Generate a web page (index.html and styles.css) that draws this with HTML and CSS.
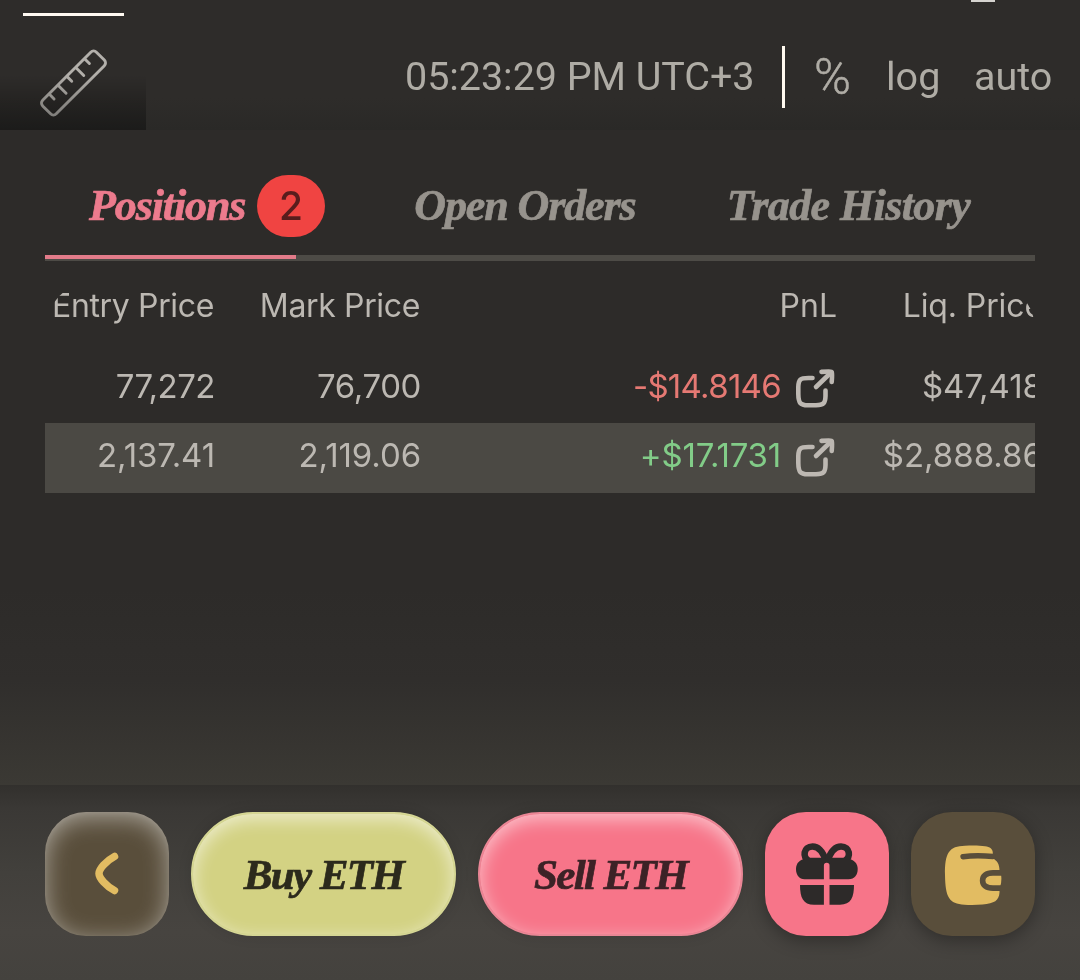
FILE: index.html
```html
<!DOCTYPE html>
<html lang="en">
<head>
<meta charset="utf-8">
<title>Positions</title>
<link rel="stylesheet" href="styles.css">
</head>
<body>
<div class="app">
  <header class="chart-bar">
    <div class="tools">
      <div class="tool-line"></div>
      <svg class="ruler" viewBox="0 0 72 72" fill="none" stroke="#b3b0ab" stroke-width="2.9" stroke-linecap="round">
        <g transform="translate(36.500 36) rotate(-45)">
          <rect x="-38" y="-9.6" width="76" height="19.2" rx="4"/>
          <path d="M-25 -9v6.500M-12.500 -9v11M0 -9v6.500M12.500 -9v11M25 -9v6.500"/>
        </g>
      </svg>
      <div class="tool-fade"></div>
    </div>
    <div class="scale">
      <span class="clock">05:23:29 PM UTC+3</span>
      <i class="divider"></i>
      <span class="percent">%</span>
      <span class="log">log</span>
      <span class="auto">auto</span>
    </div>
    <i class="top-mark"></i>
  </header>

  <main class="panel">
    <nav class="tabs">
      <div class="tab active"><span class="t-positions">Positions</span><b class="badge">2</b></div>
      <div class="tab"><span class="t-orders">Open Orders</span></div>
      <div class="tab"><span class="t-history">Trade History</span></div>
    </nav>
    <div class="track"><div class="track-on"></div></div>
    <section class="table">
      <div class="row head"><span class="h1">Entry Price</span><span class="h2">Mark Price</span><span class="h3">PnL</span><span class="h4">Liq. Price</span></div>
      <div class="row">
        <span class="n1">77,272</span><span class="n2">76,700</span>
        <span class="pnl down"><em class="p1">-$14.8146</em><svg class="share" viewBox="0 0 42 42" fill="none" stroke="#bdb8b2" stroke-width="4.6" stroke-linecap="round" stroke-linejoin="round"><path d="M18.500 10h-4C6 10 4.500 11.500 4.300 19v7C4.500 35 6 37 14 37.300h8c8-.3 9.300-2.300 9.500-9.300v-5.500"/><path d="M22 19 37 4.500"/><path d="M27.500 3.900c6-.5 10-.6 10.200.1s.5 4.600 0 10"/></svg></span>
        <span class="n4">$47,418</span>
      </div>
      <div class="row alt">
        <span class="n5">2,137.41</span><span class="n6">2,119.06</span>
        <span class="pnl up"><em class="p2">+$17.1731</em><svg class="share" viewBox="0 0 42 42" fill="none" stroke="#bdb8b2" stroke-width="4.6" stroke-linecap="round" stroke-linejoin="round"><path d="M18.500 10h-4C6 10 4.500 11.500 4.300 19v7C4.500 35 6 37 14 37.300h8c8-.3 9.300-2.300 9.500-9.300v-5.500"/><path d="M22 19 37 4.500"/><path d="M27.500 3.900c6-.5 10-.6 10.200.1s.5 4.600 0 10"/></svg></span>
        <span class="n8">$2,888.86</span>
      </div>
    </section>
  </main>

  <footer class="actions">
    <div class="btn back"><svg viewBox="0 0 124 124" fill="none" stroke="#e2bc62" stroke-width="7.5" stroke-linecap="round" stroke-linejoin="round"><path d="M69.500 44.500C61 49 54 57 54 61.500s7 12.500 15.500 17"/></svg></div>
    <div class="btn buy"><span>Buy ETH</span></div>
    <div class="btn sell"><span>Sell ETH</span></div>
    <div class="btn gift"><svg viewBox="0 0 124 124">
      <g fill="none" stroke="#2d2a29" stroke-width="6.6" stroke-linejoin="round"><path d="M61 49c-2-6-6-14.500-13.500-14.500-9 0-10.500 11-3.500 14.500z"/><path d="M62.500 49c2-6 6-14.500 13.500-14.500 9 0 10.500 11 3.500 14.500z"/></g>
      <path fill="#2d2a29" d="M31 57c0-5.500 3.500-9.500 9-10h43.500c5.500.5 9.200 4.500 9.200 10 0 6-3 10-9.200 10.400h-44C34 67 31 63 31 57z"/>
      <path fill="#2d2a29" d="M35 72.500h54c0 13-3 20-14 20.300H49C38 92.500 35 86 35 72.500z"/>
      <path fill="none" stroke="#f77589" stroke-width="5.600" d="M61.700 94V53.500M36 70.200h52" stroke-linecap="round"/>
    </svg></div>
    <div class="btn wallet"><svg viewBox="0 0 124 124">
      <path fill="#e2bc62" d="M34 63c-.3-22 4-29 20-29.300 9-.3 15-.2 20 .6 5 .8 7.800 2.500 7.800 6.500V46.500c4.500 2 6.700 6 6.700 12h.7q1.200 3 1.200 8t-1.200 8h-.7v6c-.5 8-5 11-17 12-6 .5-13 .5-18 .2C38 92 34.300 85 34 63z"/>
      <path fill="none" stroke="#594e3b" stroke-width="5.400" stroke-linecap="round" d="M52 44.700c9-1.200 19-1.200 30-.2"/>
      <path fill="none" stroke="#594e3b" stroke-width="5.600" d="M92 60.900H82c-7 0-10.400 3-10.400 7.600s3.400 7.600 10.400 7.600h10"/>
    </svg></div>
  </footer>
</div>
</body>
</html>
```
FILE: styles.css
```css
* { box-sizing: border-box; }
body { margin: 0; background: #2d2b29; }
.app { width: 1080px; height: 980px; overflow: hidden; display: flex; flex-direction: column; }
svg { display: block; flex: none; }

.chart-bar { position: relative; height: 130px; display: flex; justify-content: space-between; background: linear-gradient(#2e2c2a 75%, #2a2927); }
.tools { position: relative; width: 146px; padding-top: 13px; }
.tool-line { width: 101px; height: 3px; margin-left: 23px; background: #fffaf2; }
.ruler { width: 72px; height: 72px; margin: 31px 0 0 37px; }
.tool-fade { position: absolute; inset: 74px 0 0 0; mix-blend-mode: multiply; background: linear-gradient(#fff, #c9c9c9 50%, #a4a6a8); }
.scale { display: flex; align-items: center; height: 60px; margin-top: 47px; padding-right: 28px; font: 39.500px/60px Roboto, sans-serif; color: #afaca5; white-space: nowrap; }
.clock { width: 349px; letter-spacing: -.05px; }
.divider { width: 3px; height: 62px; margin: 0 28px; background: #fffaf0; }
.percent { width: 73px; padding-left: 1px; font-size: 50px; font-weight: 300; -webkit-text-stroke: .5px currentColor; }
.log { width: 88px; }
.auto { width: 78px; }
.top-mark { position: absolute; left: 971px; top: 0; width: 24px; height: 2px; background: #d5d3cf; }

.panel { height: 655px; padding: 0 45px; background: linear-gradient(#2d2b29 70%, #302e2c 84%, #3b3934); }
.tabs { height: 125px; padding: 45px 0 0 44px; display: flex; font: italic bold 44px/62px "Liberation Serif", serif; color: #97938d; white-space: nowrap; }
.tab { display: flex; width: 313px; }
.tab:first-child { width: 328px; }
.active { color: #ec7b8d; }
.tab span { -webkit-text-stroke: .7px currentColor; }
.t-positions { width: 168px; letter-spacing: -1.1px; }
.t-orders { letter-spacing: -1.1px; }
.t-history { letter-spacing: -.6px; padding-left: 2px; }
.badge { width: 68px; height: 62px; border-radius: 31px; background: #f04442; color: #591d1d; font: 500 39px/62px Inter, sans-serif; text-align: center; }
.track { height: 6px; background: #4d4b46; }
.track-on { width: 251px; height: 4px; background: #e27b89; }
.table { font: 400 33px/66px Inter, sans-serif; color: #bcb8b2; }
.row { height: 70px; display: grid; grid-template-columns: 169px 206px 416px 207px; overflow: hidden; text-align: right; white-space: nowrap; }
.row > * { justify-self: end; }
.head { height: 73px; margin-top: 19px; font-size: 32px; line-height: 52px; letter-spacing: -.35px; border-radius: 52px 50px 0 0; }
.h3 { letter-spacing: 0; margin-right: -1px; }
.h4 { letter-spacing: -.1px; }
.alt { background: #4b4944; line-height: 65px; }
.n1, .n2, .n5, .n6 { margin-right: -1px; }
.n1 { letter-spacing: -.5px; }
.n2 { letter-spacing: -.4px; }
.n5, .n6 { letter-spacing: -.1px; }
.pnl { display: flex; gap: 13px; }
.pnl em { font-style: normal; }
.p1 { letter-spacing: -.7px; }
.p2 { letter-spacing: -.2px; }
.down { color: #e57973; }
.up { color: #82cc88; }
.share { width: 42px; height: 42px; margin: 15px 0 0; }
.alt .share { margin-top: 14px; }

.actions { height: 195px; display: flex; gap: 22px; padding: 27px 45px; background: linear-gradient(#32302d, #3a3835 12%, #42403c 45%, #474440 75%, #44423e); }
.btn { width: 124px; height: 124px; border-radius: 41px; flex: none; font: italic bold 43px/124px "Liberation Serif", serif; letter-spacing: -1.600px; text-align: center; color: #2c2a1c; white-space: nowrap; }
.btn span { -webkit-text-stroke: .7px currentColor; }
.back { background: #594e3b; box-shadow: inset 0 5px 24px rgba(225,223,220,.6), inset 0 2px 5px rgba(255,255,255,.08); }
.buy, .sell { width: 265px; border-radius: 62px; }
.buy { background: #d3d283; border: 2px solid #d5d694; line-height: 122px; box-shadow: inset 0 5px 18px rgba(255,255,255,.6), 0 0 14px rgba(0,0,0,.12); }
.sell { background: #f77589; border: 2px solid #e98695; line-height: 122px; color: #3c2226; box-shadow: inset 0 5px 18px rgba(255,255,255,.55), 0 0 14px rgba(0,0,0,.12); }
.gift { background: #f77589; box-shadow: 0 5px 18px rgba(0,0,0,.32); }
.wallet { background: #594e3b; box-shadow: 0 5px 18px rgba(0,0,0,.32); }
```
